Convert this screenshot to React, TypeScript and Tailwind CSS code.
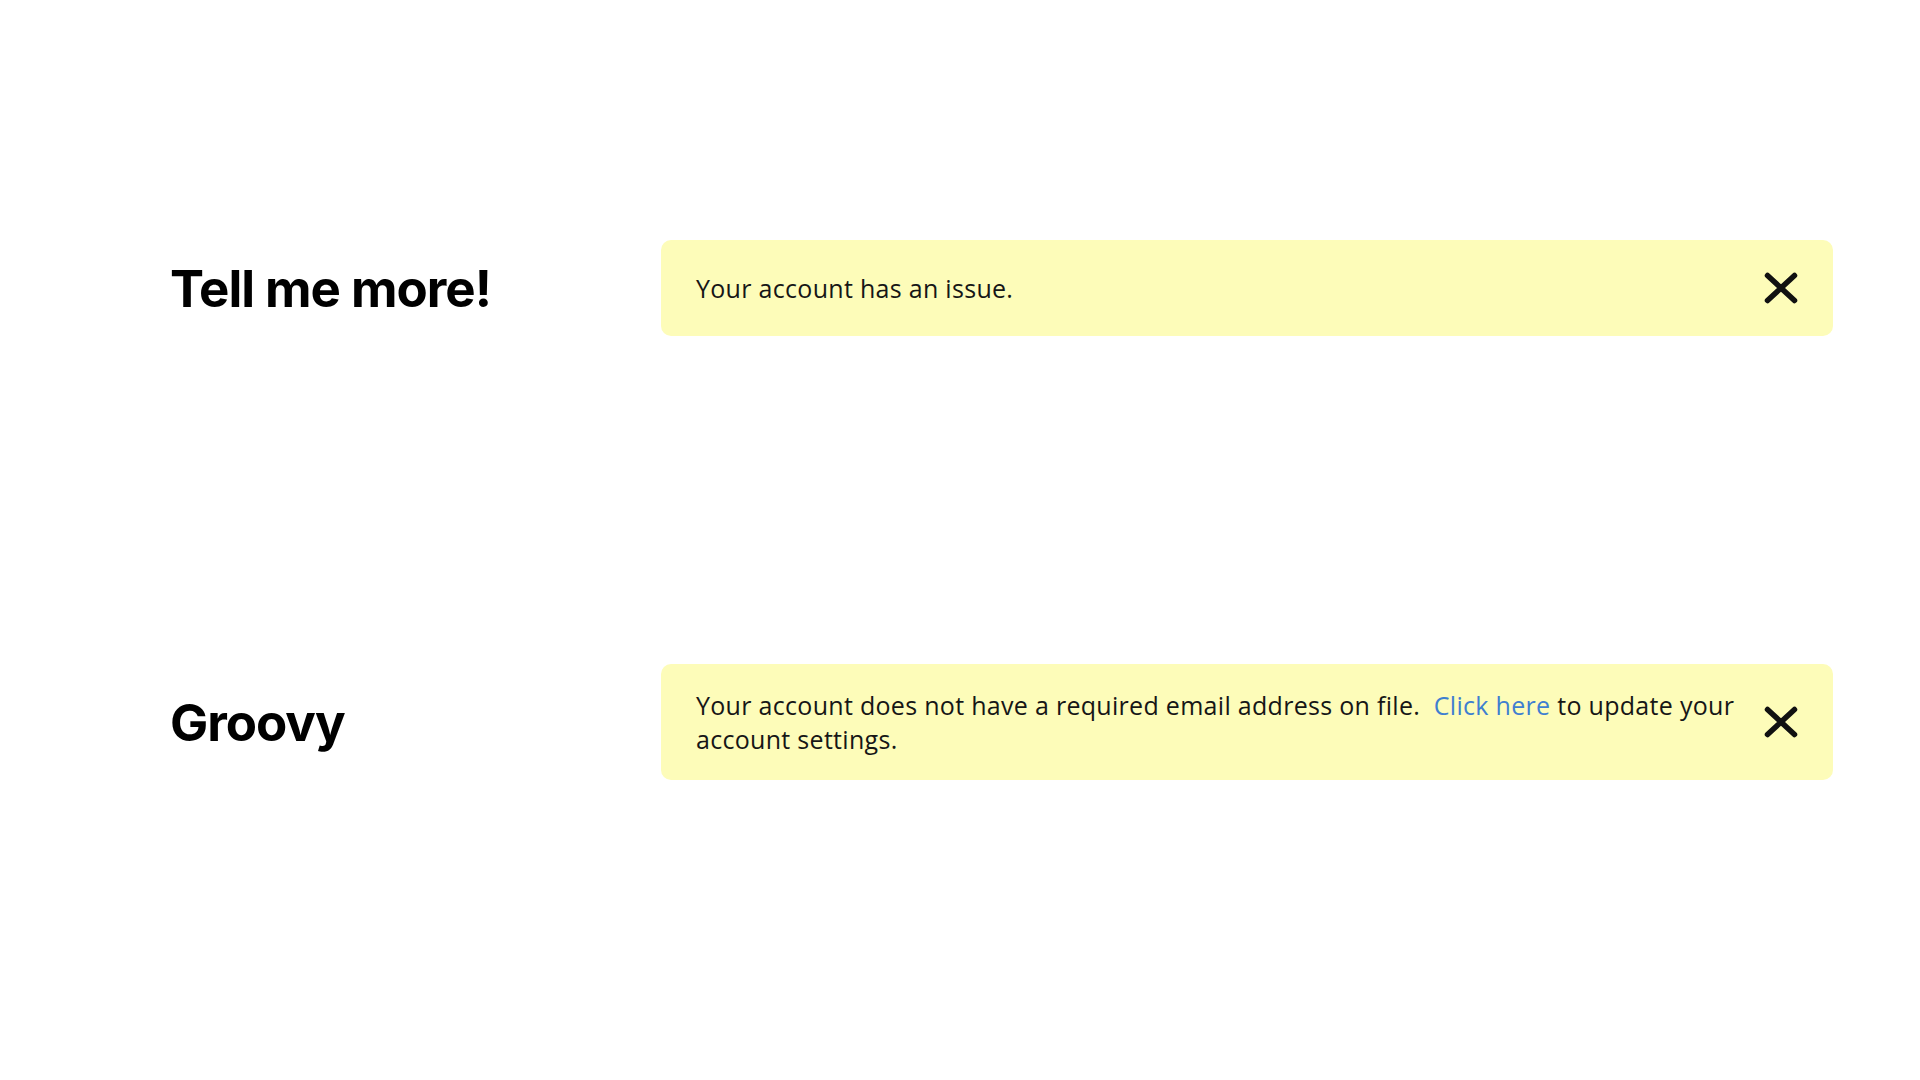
import React from "react";

const body = { fontFamily: '"Open Sans", "Noto Sans", sans-serif' };
const head = { fontFamily: 'Inter, "Liberation Sans", sans-serif' };

function CloseIcon() {
  return (
    <svg width="48" height="48" viewBox="0 0 48 48" fill="none">
      <path
        d="M10.5 11.5 L37.5 36.5 M37.5 11.5 L10.5 36.5"
        stroke="#111"
        strokeWidth="5.5"
        strokeLinecap="round"
      />
    </svg>
  );
}

function Row({ title, children }: { title: string; children: React.ReactNode }) {
  return (
    <div className="flex items-center">
      <h2
        className="w-[491px] shrink-0 text-[51px] font-bold leading-none tracking-[-0.02em] text-black"
        style={head}
      >
        {title}
      </h2>
      {/* banner */}
      <div className="flex w-[1172px] items-center justify-between rounded-[10px] bg-[#fdfcb9] py-6 pl-[35px] pr-7">
        <p className="max-w-[1050px] text-[25px] leading-[34px] tracking-[0.012em] text-[#161616]" style={body}>
          {children}
        </p>
        <button className="flex h-12 w-12 shrink-0 items-center justify-center">
          <CloseIcon />
        </button>
      </div>
    </div>
  );
}

export default function App() {
  return (
    <div className="min-h-screen bg-white pl-[170px] pt-[240px]">
      <div className="flex flex-col gap-[328px]">
        <Row title="Tell me more!">Your account has an issue.</Row>
        <Row title="Groovy">
          Your account does not have a required email address on file.{"\u00a0 "}
          <a className="text-[#3f7fd0]">Click here</a> to update your account settings.
        </Row>
      </div>
    </div>
  );
}
